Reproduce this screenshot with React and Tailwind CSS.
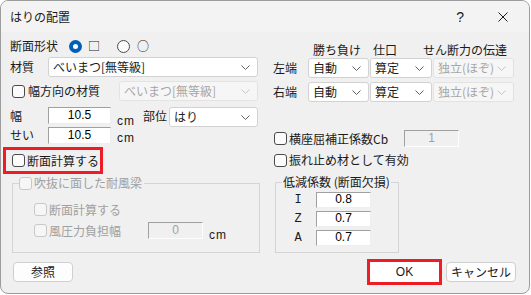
import React from "react";

const Chevron = ({ disabled }) => (
  <svg width="9" height="5" viewBox="0 0 9 5" className="shrink-0">
    <path d="M0.5 0.5 L4.5 4.5 L8.5 0.5" fill="none" stroke={disabled ? "#c6c6c6" : "#606060"} strokeWidth="1" />
  </svg>
);

const Select = ({ value, className, disabled }) => (
  <div
    className={`flex h-[20px] items-center justify-between rounded-[3px] border pl-[4px] pr-[7px] ${
      disabled ? "border-[#e3e3e3] bg-[#f6f6f6] text-[#a6a6a6]" : "border-[#d2d2d2] bg-white text-[#1a1a1a]"
    } ${className}`}
  >
    <span>{value}</span>
    <Chevron disabled={disabled} />
  </div>
);

const Check = ({ disabled }) => (
  <span
    className={`inline-block h-[13px] w-[13px] shrink-0 rounded-[3px] border ${
      disabled ? "border-[#c9c9c9] bg-[#f6f6f6]" : "border-[#4a4a4a] bg-[#fbfbfb]"
    }`}
  />
);

const Edit = ({ value, className, disabled }) => (
  <div
    className={`flex items-center justify-center border pb-[2px] font-['Liberation_Sans',sans-serif] text-[12px] leading-none ${
      disabled
        ? "border-t-[#a0a0a0] border-l-[#a0a0a0] border-b-[#fdfdfd] border-r-[#fdfdfd] bg-[#f0f0f0] text-[#a0a0a0]"
        : "border-t-[#a0a0a0] border-l-[#a0a0a0] border-b-[#eeeeee] border-r-[#eeeeee] bg-white text-black"
    } ${className}`}
  >
    {value}
  </div>
);

const Radio = ({ checked }) =>
  checked ? (
    <span className="flex h-[13px] w-[13px] shrink-0 items-center justify-center rounded-full bg-[#005fb8]">
      <span className="h-[5px] w-[5px] rounded-full bg-white" />
    </span>
  ) : (
    <span className="inline-block h-[13px] w-[13px] shrink-0 rounded-full border border-[#4a4a4a] bg-[#fbfbfb]" />
  );

const Cm = ({ className }) => (
  <span className={`font-['Liberation_Sans',sans-serif] text-[12px] tracking-[1px] ${className}`}>cm</span>
);

export default function App() {
  return (
    <div className="h-[295px] w-[531px] bg-white">
      <div className="flex h-[294px] w-[530px] flex-col overflow-hidden rounded-[8px] border border-[#9c9c9c] bg-[#f0f0f0] font-['Noto_Sans_CJK_JP',sans-serif] text-[12px] leading-none text-[#1a1a1a]">
        {/* Title bar */}
        <div className="flex h-[31px] shrink-0 items-center bg-[#f3f3f3] pl-[9px] pr-[21px]">
          <span>はりの配置</span>
          <span className="ml-auto font-['Liberation_Sans',sans-serif] text-[14px]">?</span>
          <svg width="10" height="10" viewBox="0 0 10 10" className="ml-[34px]">
            <path d="M0.5 0.5 L9.5 9.5 M9.5 0.5 L0.5 9.5" stroke="#1a1a1a" strokeWidth="1" />
          </svg>
        </div>

        {/* Body */}
        <div className="flex">
          {/* Left column */}
          <div className="flex w-[262px] flex-col pl-[9px]">
            <div className="mt-[4px] flex h-[20px] w-[248px] items-center">
              <span className="w-[59px]">断面形状</span>
              <Radio checked />
              <span className="ml-[6px]">□</span>
              <span className="ml-[17px] flex items-center">
                <Radio />
              </span>
              <span className="ml-[7px]">○</span>
            </div>

            <div className="mt-[1px] flex h-[20px] w-[248px] items-center">
              <span className="w-[38px]">材質</span>
              <Select value="べいまつ[無等級]" className="w-[210px]" />
            </div>

            <div className="mt-[4px] flex h-[20px] w-[248px] items-center">
              <span className="ml-[2px] flex items-center">
                <Check />
              </span>
              <span className="ml-[3px]">幅方向の材質</span>
              <Select value="べいまつ[無等級]" className="ml-auto w-[139px]" disabled />
            </div>

            <div className="mt-[6px] flex h-[20px] w-[248px] items-start">
              <span className="mt-[3px] w-[38px]">幅</span>
              <Edit value="10.5" className="h-[17px] w-[63px]" />
              <Cm className="ml-[6px] mt-[8px]" />
              <span className="ml-[8px] mt-[3px]">部位</span>
              <Select value="はり" className="ml-auto w-[89px]" />
            </div>

            <div className="flex h-[18px] w-[248px] items-start">
              <span className="mt-[2px] w-[38px]">せい</span>
              <Edit value="10.5" className="h-[17px] w-[63px]" />
              <Cm className="ml-[6px] mt-[5px]" />
            </div>

            <div className="-ml-[7px] mt-[2px] flex h-[27px] w-[100px] items-center border-[3px] border-[#ee1c24] pl-[6px]">
              <Check />
              <span className="ml-[2px]">断面計算する</span>
            </div>

            <fieldset className="ml-[2px] mt-[2px] h-[77px] w-[248px] border border-[#d4d4d4]">
              <legend className="ml-[6px] flex h-[14px] items-center pr-[2px] text-[#a0a0a0]">
                <Check disabled />
                <span className="ml-[2px]">吹抜に面した耐風梁</span>
              </legend>
              <div className="ml-[21px] mt-[13px] flex h-[13px] items-center text-[#a0a0a0]">
                <Check disabled />
                <span className="ml-[2px]">断面計算する</span>
              </div>
              <div className="ml-[21px] mt-[6px] flex h-[17px] items-center text-[#a0a0a0]">
                <Check disabled />
                <span className="ml-[2px] w-[99px]">風圧力負担幅</span>
                <Edit value="0" className="h-[17px] w-[55px]" disabled />
                <Cm className="ml-[6px] mt-[8px] text-[#1a1a1a]" />
              </div>
            </fieldset>
          </div>

          {/* Right column */}
          <div className="flex flex-col pl-[10px]">
            <div className="mt-[11px] flex h-[14px] items-center pl-[40px]">
              <span className="w-[60px]">勝ち負け</span>
              <span className="w-[50px]">仕口</span>
              <span>せん断力の伝達</span>
            </div>

            <div className="mt-[1px] flex h-[20px] items-center">
              <span className="w-[35px]">左端</span>
              <Select value="自動" className="w-[61px]" />
              <Select value="算定" className="ml-[1px] w-[62px]" />
              <Select value="独立(ほぞ)" className="ml-[1px] w-[81px]" disabled />
            </div>

            <div className="mt-[4px] flex h-[20px] items-center">
              <span className="w-[35px]">右端</span>
              <Select value="自動" className="w-[61px]" />
              <Select value="算定" className="ml-[1px] w-[62px]" />
              <Select value="独立(ほぞ)" className="ml-[1px] w-[81px]" disabled />
            </div>

            <div className="mt-[28px] flex h-[17px] items-center">
              <div className="flex w-[131px] items-center pl-[1px]">
                <Check />
                <span className="ml-[2px]">横座屈補正係数Cb</span>
              </div>
              <Edit value="1" className="h-[17px] w-[55px]" disabled />
            </div>

            <div className="mt-[6px] flex h-[14px] items-center pl-[1px]">
              <Check />
              <span className="ml-[2px]">振れ止め材として有効</span>
            </div>

            <fieldset className="ml-[2px] mt-[8px] h-[78px] w-[124px] border border-[#d4d4d4]">
              <legend className="ml-[6px] px-[1px] leading-[14px]">低減係数 (断面欠損)</legend>
              <div className="flex flex-col gap-[3px] pt-[3px] font-['Liberation_Mono',monospace]">
                {[
                  ["I", "0.8"],
                  ["Z", "0.7"],
                  ["A", "0.7"],
                ].map(([k, v]) => (
                  <div key={k} className="flex h-[16px] items-center">
                    <span className="w-[40px] pl-[4px] text-center">{k}</span>
                    <Edit value={v} className="h-[16px] w-[55px]" />
                  </div>
                ))}
              </div>
            </fieldset>
          </div>
        </div>

        {/* Buttons */}
        <div className="mt-[6px] flex h-[26px] items-center pl-[12px] pr-[13px]">
          <button className="flex h-[20px] w-[60px] items-center justify-center rounded-[4px] border border-[#cfcfcf] bg-[#fdfdfd]">
            参照
          </button>
          <div className="ml-auto flex h-[26px] w-[75px] items-center justify-center border-[3px] border-[#ee1c24] bg-white">
            <span className="font-['Liberation_Sans',sans-serif]">OK</span>
          </div>
          <button className="ml-[4px] flex h-[20px] w-[70px] items-center justify-center rounded-[4px] border border-[#cfcfcf] bg-[#fdfdfd]">
            キャンセル
          </button>
        </div>
      </div>
    </div>
  );
}
